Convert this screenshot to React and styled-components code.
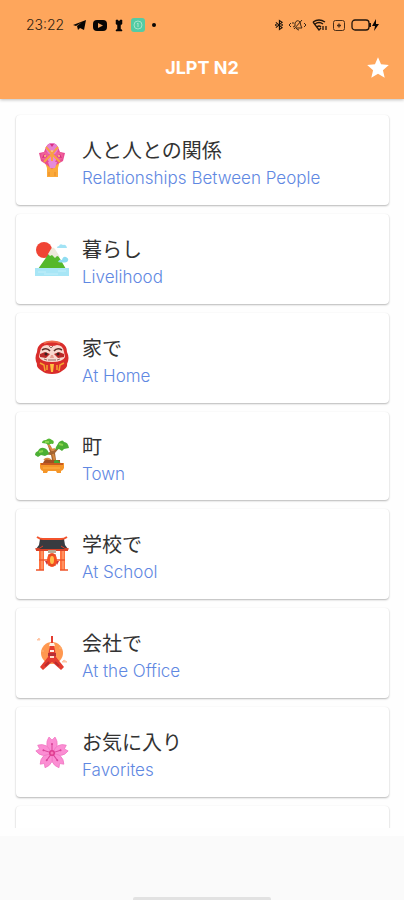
import React from "react";
import styled, { createGlobalStyle } from "styled-components";

const GlobalStyle = createGlobalStyle`
  * { box-sizing: border-box; }
  body { margin: 0; background: #fefefe; font-family: Inter, "Noto Sans CJK JP", sans-serif; }
  button { font: inherit; border: 0; padding: 0; background: none; cursor: pointer; }
`;

const Screen = styled.div`
  display: flex;
  flex-direction: column;
  height: 100vh;
  overflow: hidden;
`;

const Header = styled.header`
  flex: none;
  background: #fea65c;
  box-shadow: 0 1px 3px rgba(0, 0, 0, 0.25);
  z-index: 1;
`;

const StatusBar = styled.div`
  display: flex;
  align-items: center;
  justify-content: space-between;
  height: 36px;
  padding: 14px 25px 0 26px;
  color: #2b1c10;
`;

const StatusGroup = styled.div`
  display: flex;
  align-items: center;
  gap: ${(p) => p.$gap}px;
`;

const Clock = styled.time`
  font-size: 14px;
  line-height: 22px;
  font-weight: 300;
  margin-right: 2px;
`;

const AppBar = styled.div`
  display: grid;
  grid-template-columns: 1fr auto 1fr;
  align-items: center;
  height: 63px;
  padding: 0 13px;
`;

const Title = styled.h1`
  grid-column: 2;
  margin: 0;
  font-size: 18px;
  line-height: 24px;
  font-weight: 700;
  color: #fff;
`;

const StarButton = styled.button`
  justify-self: end;
  display: flex;
  color: #fff;
`;

const List = styled.main`
  flex: 1;
  min-height: 0;
  display: flex;
  flex-direction: column;
  gap: 9px;
  padding: 16px 15px 0 16px;
  margin-bottom: 8px;
  overflow-y: auto;
  scrollbar-width: none;
`;

const Card = styled.button`
  flex: none;
  display: flex;
  align-items: center;
  gap: 13px;
  width: 100%;
  min-height: ${(p) => (p.$compact ? 88 : 90)}px;
  padding: 0 19px;
  border-radius: 4px;
  background: #fff;
  text-align: left;
  box-shadow: 0 1px 2px rgba(0, 0, 0, 0.28), 0 0 1px rgba(0, 0, 0, 0.06);
`;

const CardText = styled.span`
  display: flex;
  flex-direction: column;
  padding-top: 5px;
`;

const Japanese = styled.span`
  font-family: "Noto Sans CJK JP", sans-serif;
  font-size: 20px;
  line-height: 30px;
  color: #333;
`;

const English = styled.span`
  font-size: 17px;
  line-height: 26px;
  font-weight: 300;
  color: #5f88e2;
`;

const Footer = styled.footer`
  flex: none;
  display: flex;
  align-items: flex-end;
  justify-content: center;
  height: 64px;
  background: #fafafa;
`;

const HomeHandle = styled.div`
  width: 34%;
  height: 3px;
  border-radius: 2px 2px 0 0;
  background: #e2e2e2;
`;

const Art = ({ children }) => (
  <svg width="34" height="36" viewBox="0 0 34 36" aria-hidden="true">{children}</svg>
);

const Bouquet = () => (
  <Art>
    <path d="M9 18h16l-2 8v9H12v-9z" fill="#fbaa3a" />
    <path d="M14 30v4M20 30v4" stroke="#e98b28" fill="none" />
    <path d="M4 11l5-1 2-5q2-4 6-4t6 4l2 5 5 1-2 8-7 4-4 4-5-4-6-4z" fill="#e94c93" />
    <circle cx="17" cy="7" r="6" fill="#e77fd0" />
    <circle cx="10" cy="14" r="4" fill="#f0609a" />
    <circle cx="24" cy="14" r="4" fill="#f0609a" />
    <circle cx="17" cy="17" r="4" fill="#eb87d8" />
    <path d="M11 5l6 7 6-7M9 20l8-8 8 8M17 11v8" stroke="#f8a044" strokeWidth="2" fill="none" />
    <path d="M13 20h9l-2 6h-5z" fill="#e58bdb" />
    <path d="M15 2h4l-2 3zM7 16l2-4 3 3zM22 15l3-3 2 4z" fill="#d72e80" />
    <circle cx="10" cy="14" r="1" fill="#ffd075" /><circle cx="24" cy="14" r="1" fill="#ffd075" /><circle cx="17" cy="9" r="1" fill="#ffd075" />
  </Art>
);

const Mountain = () => (
  <Art>
    <circle cx="9" cy="9" r="8" fill="#f04435" />
    <path d="M3 28L15 11q3-5 6 0l10 17z" fill="#55b82c" />
    <path d="M13 13l3-5q2-3 4 0l5 8-3-1-2 2-3-3-2 1z" fill="#eee9db" />
    <path d="M22 7q0-2 2-2 1-3 4-1 3-1 4 3z" fill="#a2e3f5" />
    <path d="M23 21q1-3 4-2 1-4 4-3 4 2 1 5-4 1-9 0z" fill="#8edcf1" />
    <path d="M0 27h34v8H0z" fill="#a8e6f6" />
    <path d="M3 31h8M9 33h14M23 30h8" stroke="#c3effa" />
  </Art>
);

const Daruma = () => (
  <Art>
    <path d="M7 3Q17-1 27 3q5 3 5 9 3 6 0 12 1 4-5 7-3 3-10 3t-10-3q-6-3-5-7-3-6 0-12 0-6 5-9z" fill="#d92d2b" />
    <path d="M9 3q8-3 16 0" stroke="#f06b4c" strokeWidth="2" fill="none" />
    <path d="M5 12q1-7 7-7 5 2 10 0 6 0 7 7l1 5q-2 5-13 5T4 17z" fill="#f8d9cf" />
    <path d="M7 10q5-3 8 1M27 10q-5-3-8 1" stroke="#5c3029" strokeWidth="1.5" fill="none" />
    <path d="M5 14l5-2 5 2-4 4-6-1zM29 14l-5-2-5 2 4 4 6-1z" fill="#b92927" />
    <circle cx="11" cy="14" r="1.5" fill="#392222" /><circle cx="23" cy="14" r="1.5" fill="#392222" />
    <path d="M14 6l2 2 2-2M9 19l3 1M25 19l-3 1M13 20h8" stroke="#94716a" fill="none" />
    <path d="M16 15h2l1 3h-4z" fill="#e79e91" />
    <path d="M5 23l4 2 1 6M29 23l-4 2-1 6M12 25v5M22 25v5" stroke="#f5a52f" strokeWidth="1.5" fill="none" />
    <path d="M15 24h4l-1 8h-2z" fill="#ffc03e" />
  </Art>
);

const Bonsai = () => (
  <Art>
    <path d="M12 5l4 3 1 5 8-4-5 6 1 7 3 5H10l7-5-1-5-8-1 7-2z" fill="#a56532" />
    <path d="M13 6l4 6 3-1M18 16l2 8M9 22q5-3 8 2" stroke="#d88b42" strokeWidth="2" fill="none" />
    <path d="M7 5q0-3 4-3 3-3 6 0 3 1 1 4-2-1-4 1-3-2-7-2z" fill="#56b934" />
    <path d="M21 9l3-5q4-3 5 0 4 0 5 6l-5 1-2 2-3-2-4 1z" fill="#4caf35" />
    <path d="M0 17q0-3 3-4 2-4 6-3 4 1 5 6l-4 2-4-1-3 2z" fill="#4caf35" />
    <path d="M4 14l4-1M24 6l4 1M10 4h4" stroke="#88d54b" strokeWidth="2" />
    <path d="M8 25q2-5 6-3h11v4z" fill="#a34f23" /><path d="M19 23q4-3 7 3h-7z" fill="#45a733" />
    <path d="M5 25h24v5q-1 3-3 3v2h-4l-1-2h-8l-1 2H8v-2q-3-1-3-4z" fill="#f59629" />
    <path d="M6 25h22v2H6z" fill="#c95c20" /><path d="M8 30h17" stroke="#ffb34a" />
  </Art>
);

const Shrine = () => (
  <Art>
    <path d="M4 14h5v20H4zM25 14h5v20h-5z" fill="#ff713e" />
    <path d="M7 14v20M28 14v20" stroke="#ffb182" />
    <path d="M1 13h32v2H1z" fill="#d94127" />
    <path d="M1 34h8M25 34h8M4 24h26" stroke="#ee562c" strokeWidth="1.5" fill="none" />
    <path d="M5 3h24l1 6 3 4H1l3-4z" fill="#383b40" />
    <path d="M2 1q3 2 6 2h18q3 0 6-2" stroke="#f3532c" strokeWidth="2" fill="none" />
    <path d="M0 13q5 0 8-3M34 13q-5 0-8-3" stroke="#df4127" fill="none" />
    <path d="M10 25l2 4 2-4M20 25l2 4 2-4" fill="#cc343e" />
    <path d="M13 14h8v3h-8z" fill="#b8ab95" />
    <ellipse cx="17" cy="24" rx="5" ry="7" fill="#f85221" />
    <ellipse cx="17" cy="24" rx="2" ry="4" fill="#ffc04b" />
    <path d="M13 19h8M13 29h8" stroke="#d94222" />
  </Art>
);

const Tower = () => (
  <Art>
    <circle cx="17" cy="18" r="11" fill="#ff9850" />
    <path d="M16 7V1h2v6l2 8 1 7 8 10-3 3-9-8-9 8-3-3 8-10 1-7z" fill="#e43c30" />
    <path d="M15 8h4l1 3h-6zM15 15h4v2h-4z" fill="#fff0e3" />
    <path d="M13 18h8v3h-8z" fill="#b92f35" /><path d="M15 21h4v2h-4z" fill="#ffe0cd" />
    <path d="M10 31l4-4M24 31l-4-4" stroke="#b92b30" strokeWidth="2" />
    <path d="M2 5l2-2 1 2zM27 27l2-2 3 2z" fill="#ffc6a5" stroke="#ffc6a5" />
    <path d="M6 16h3M24 13h3" stroke="#ffb477" />
  </Art>
);

const Petal = ({ angle }) => (
  <g transform={`rotate(${angle} 17 19)`}>
    <path d="M17 18q-3-2-5-6-1-5 2-9l3 3 3-3q3 4 2 9-2 4-5 6z" fill="#fb8ed3" stroke="#f075c2" strokeWidth=".7" />
    <path d="M17 17v-7" stroke="#d94499" />
    <circle cx="17" cy="10" r="1" fill="#d94499" />
  </g>
);

const Blossom = () => (
  <Art>
    {[0, 72, 144, 216, 288].map((angle) => <Petal key={angle} angle={angle} />)}
    <circle cx="17" cy="19" r="3" fill="#df3b90" /><circle cx="17" cy="19" r="1.5" fill="#f874b9" />
  </Art>
);

const StatusIcons = () => (
  <>
    <svg width="13" height="12" viewBox="0 0 13 12" aria-hidden="true"><path d="M0 6L13 1l-2 10-4-2-2 2-1-4 5-4-6 4z" fill="#080604" /></svg>
    <svg width="14" height="11" viewBox="0 0 14 11" aria-hidden="true"><rect width="14" height="11" rx="4" fill="#080604" /><path d="M5 3l5 2.5L5 8z" fill="#f5a35b" /></svg>
    <svg width="10" height="13" viewBox="0 0 10 13" aria-hidden="true"><path d="M2 1h2v1h2V1h2v4L6.5 6v4L8 11v1H2v-1l1.5-1V6L2 5z" fill="#080604" stroke="#080604" strokeWidth=".5" /></svg>
    <svg width="14" height="14" viewBox="0 0 14 14" aria-hidden="true"><rect width="14" height="14" rx="3" fill="#54cba4" /><circle cx="7" cy="7" r="4" fill="none" stroke="#a5e5ca" /><path d="M7 5v4M6 6l1-1" fill="none" stroke="#a5e5ca" /></svg>
    <svg width="4" height="4" viewBox="0 0 4 4" aria-hidden="true"><circle cx="2" cy="2" r="2" fill="#080604" /></svg>
  </>
);

const SystemIcons = () => (
  <>
    <svg width="8" height="12" viewBox="0 0 9 12" fill="none" stroke="#171009" strokeWidth="1.3" aria-hidden="true"><path d="M1 3l7 6-3 2V1l3 2-7 6" /><circle cx="1" cy="6" r=".4" /><circle cx="8" cy="6" r=".4" /></svg>
    <svg width="17" height="12" viewBox="0 0 17 12" fill="none" stroke="#3d2613" aria-hidden="true"><path d="M2 4L0 6l2 2M15 4l2 2-2 2M4 8l2-1V4q2-4 5-1l1 4 1 2H7q1 2 3 2M4 3v2M5 10l8-9" /></svg>
    <svg width="15" height="12" viewBox="0 0 15 12" fill="none" stroke="#21150b" strokeWidth="1.3" aria-hidden="true"><path d="M1 3q6-4 12 0M3 5q4-3 8 0M5 8q2-2 4 0M1 3l6 8 2-2M11 7v4M14 7v4" /></svg>
    <svg width="12" height="11" viewBox="0 0 12 11" fill="none" stroke="#4b2e17" aria-hidden="true"><rect x=".5" y=".5" width="11" height="10" rx="2" /><path d="M4 5.5h4M6 3.5v4" strokeWidth="1.4" /></svg>
    <svg width="28" height="12" viewBox="0 0 28 12" aria-hidden="true"><rect x="1" y="1" width="17" height="10" rx="3" fill="none" stroke="#21150b" strokeWidth="1.3" /><path d="M19 4v4" stroke="#21150b" strokeWidth="2" /><path d="M25 0l-4 7h3l-1 5 5-7h-3z" fill="#080604" /></svg>
  </>
);

const topics = [
  { ja: "人と人との関係", en: "Relationships Between People", Icon: Bouquet },
  { ja: "暮らし", en: "Livelihood", Icon: Mountain },
  { ja: "家で", en: "At Home", Icon: Daruma },
  { ja: "町", en: "Town", Icon: Bonsai, compact: true },
  { ja: "学校で", en: "At School", Icon: Shrine },
  { ja: "会社で", en: "At the Office", Icon: Tower },
  { ja: "お気に入り", en: "Favorites", Icon: Blossom },
];

export default function App() {
  return (
    <Screen>
      <GlobalStyle />
      <Header>
        <StatusBar>
          <StatusGroup $gap={7}><Clock>23:22</Clock><StatusIcons /></StatusGroup>
          <StatusGroup $gap={6}><SystemIcons /></StatusGroup>
        </StatusBar>
        <AppBar>
          <Title>JLPT N2</Title>
          <StarButton type="button" aria-label="Favorites">
            <svg width="26" height="26" viewBox="0 0 24 24" fill="currentColor" aria-hidden="true"><path d="M12 17.27L18.18 21l-1.64-7.03L22 9.24l-7.19-.61L12 2 9.19 8.63 2 9.24l5.46 4.73L5.82 21z" /></svg>
          </StarButton>
        </AppBar>
      </Header>
      <List>
        {topics.map(({ ja, en, Icon, compact }) => (
          <Card key={en} type="button" $compact={compact}>
            <Icon />
            <CardText>
              <Japanese lang="ja">{ja}</Japanese>
              <English>{en}</English>
            </CardText>
          </Card>
        ))}
        <Card as="div" />
      </List>
      <Footer><HomeHandle /></Footer>
    </Screen>
  );
}
